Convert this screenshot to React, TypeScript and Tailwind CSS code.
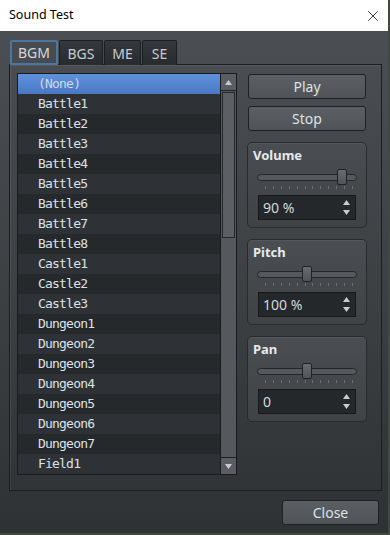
import { X } from 'lucide-react';

const tracks = [
  '(None)', 'Battle1', 'Battle2', 'Battle3', 'Battle4', 'Battle5', 'Battle6', 'Battle7', 'Battle8',
  'Castle1', 'Castle2', 'Castle3',
  'Dungeon1', 'Dungeon2', 'Dungeon3', 'Dungeon4', 'Dungeon5', 'Dungeon6', 'Dungeon7', 'Field1',
];

const tabs = [
  { label: 'BGM', w: 'w-[48px]' },
  { label: 'BGS', w: 'w-[44px]' },
  { label: 'ME', w: 'w-[37px]' },
  { label: 'SE', w: 'w-[35px]' },
];

function Triangle({ up }: { up?: boolean }) {
  return (
    <svg width="7" height="5" viewBox="0 0 7 5">
      <polygon points={up ? '3.5,0 7,5 0,5' : '0,0 7,0 3.5,5'} fill="#c4ccd4" />
    </svg>
  );
}

function SliderGroup({ title, value, pos }: { title: string; value: string; pos: number }) {
  // pos = thumb left offset inside the 100px track
  return (
    <div className="flex flex-col h-[86px] border border-[#282b2e] rounded-[5px] bg-gradient-to-b from-[#4a4e52] to-[#3f4346] shadow-[inset_0_1px_0_rgba(255,255,255,0.06)]">
      <div className="pt-[4px] pl-[5px] h-[20px] text-[13px] leading-[16px] font-bold text-[#e6e9ec]">{title}</div>
      <div className="relative ml-[9px] mt-[6px] w-[100px] h-[16px] flex items-center">
        <div className="w-full h-[7px] rounded-full bg-[#55595d] border border-[#24272a]" />
        <div
          className="absolute top-0 w-[10px] h-[16px] rounded-[2px] bg-gradient-to-b from-[#686c70] to-[#505458] border border-[#202326]"
          style={{ left: pos }}
        />
      </div>
      <div className="ml-[17px] mt-[1px] w-[88px] h-[3px] flex justify-between">
        {Array.from({ length: 12 }).map((_, i) => (
          <div key={i} className="w-px h-[3px] bg-[#6c7075]" />
        ))}
      </div>
      <div className="ml-[10px] mt-[6px] w-[98px] h-[25px] flex items-center justify-between bg-[#25282b] border border-[#16181a] pl-[4px] pr-[5px]">
        <span className="text-[14px] text-[#d4d8dc]">{value}</span>
        <div className="flex flex-col gap-[5px]">
          <Triangle up />
          <Triangle />
        </div>
      </div>
    </div>
  );
}

function Button({ label, className }: { label: string; className?: string }) {
  return (
    <div
      className={`h-[25px] flex items-center justify-center rounded-[3px] border border-[#1e2124] bg-gradient-to-b from-[#5b5f63] to-[#505458] text-[14px] text-[#dde1e5] ${className ?? ''}`}
    >
      {label}
    </div>
  );
}

export default function App() {
  return (
    <div className="w-[390px] h-[535px] bg-[#3e4a3c] overflow-hidden" style={{ fontFamily: '"Noto Sans", "Open Sans", sans-serif' }}>
      <div className="w-[388px] h-[533px] flex flex-col">
        {/* Title bar */}
        <div className="h-[31px] bg-white flex items-center justify-between pl-[9px] pr-[6px] shrink-0">
          <span className="text-[12.5px] text-black">Sound Test</span>
          <X size={18} strokeWidth={1} className="text-black" />
        </div>

        {/* Body */}
        <div className="flex-1 flex flex-col bg-gradient-to-b from-[#4b4f53] to-[#2f3235] pt-[9px] pl-[9px] pr-[7px]">
          {/* Tabs */}
          <div className="flex items-end gap-px pl-[1px] h-[25px] -mb-px relative z-10">
            {tabs.map((t, i) => (
              <div
                key={t.label}
                className={`${t.w} h-[25px] flex items-center justify-center text-[14px] rounded-t-[2px] ${
                  i === 0
                    ? 'border-2 border-[#4a76a0] bg-[#474b4f] text-[#d4d8dc]'
                    : 'border border-[#1c1f22] border-b-0 bg-gradient-to-b from-[#34383c] to-[#282b2e] text-[#c8ccd0]'
                }`}
              >
                {t.label}
              </div>
            ))}
          </div>

          {/* Panel */}
          <div className="w-[373px] h-[427px] border border-[#1b1e21] shadow-[inset_1px_1px_0_rgba(255,255,255,0.07)] flex pl-[7px] pt-[8px]">
            {/* List */}
            <div className="w-[220px] h-[402px] border border-[#191b1e] flex">
              <div className="flex-1 flex flex-col" style={{ fontFamily: '"DejaVu Sans Mono", "Liberation Mono", monospace' }}>
                {tracks.map((name, i) => (
                  <div
                    key={name}
                    className={`h-[20px] flex items-center pl-[20px] text-[13px] tracking-[-0.8px] ${
                      i === 0
                        ? 'bg-gradient-to-b from-[#6092dc] to-[#4a78c4] text-[#cfd9ea]'
                        : i % 2 === 1
                        ? 'bg-[#2e3236] text-[#dde1e5]'
                        : 'bg-[#26292c] text-[#dde1e5]'
                    }`}
                  >
                    {name}
                  </div>
                ))}
              </div>
              {/* Scrollbar */}
              <div className="w-[16px] border-l border-[#191b1e] flex flex-col bg-[#55595d]">
                <div className="h-[17px] flex items-center justify-center bg-[#5a5e62] border-b border-[#1f2225]">
                  <Triangle up />
                </div>
                <div className="h-[146px] bg-[#5c6064] border border-[#25282b] mx-px mt-px" />
                <div className="flex-1" />
                <div className="h-[17px] flex items-center justify-center bg-[#5a5e62] border-t border-[#1f2225]">
                  <Triangle />
                </div>
              </div>
            </div>

            {/* Right column */}
            <div className="ml-[10px] w-[120px] flex flex-col">
              <Button label="Play" className="mt-px w-[118px] ml-px" />
              <Button label="Stop" className="mt-[7px] w-[118px] ml-px" />
              <div className="mt-[11px] flex flex-col gap-[11px]">
                <SliderGroup title="Volume" value="90 %" pos={80} />
                <SliderGroup title="Pitch" value="100 %" pos={45} />
                <SliderGroup title="Pan" value="0" pos={45} />
              </div>
            </div>
          </div>

          {/* Footer */}
          <div className="flex justify-end pt-[9px]">
            <Button label="Close" className="w-[97px] mr-[2px]" />
          </div>
        </div>
      </div>
    </div>
  );
}
